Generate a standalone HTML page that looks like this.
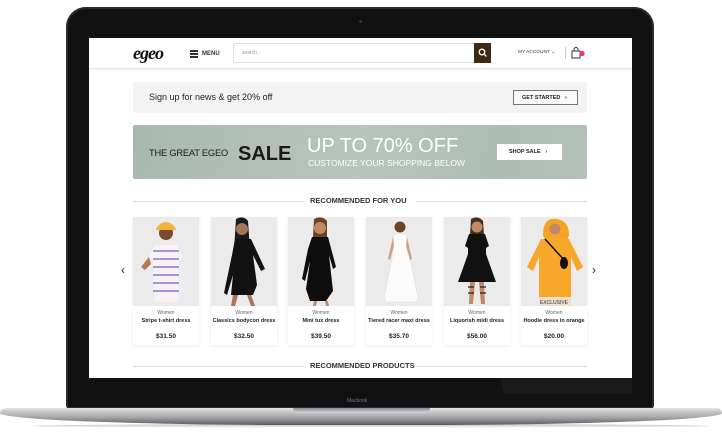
<!DOCTYPE html>
<html><head><meta charset="utf-8"><style>
*{margin:0;padding:0;box-sizing:border-box}
body{width:722px;height:443px;background:#fff;position:relative;overflow:hidden;font-family:"Liberation Sans",sans-serif;line-height:1}
.abs{position:absolute}
.lid{left:66px;top:7px;width:588px;height:402px;background:#111;border-radius:20px 20px 4px 4px;box-shadow:inset 0 0 0 2px #2a2a2a}
.screen{left:89px;top:38px;width:543px;height:340px;background:#fff;overflow:hidden}
.base{left:0;top:408px;width:722px;height:17px;background:linear-gradient(#e8e8ea 0,#c9c9cc 20%,#a6a6aa 55%,#6c6c70 90%,#555 100%);border-radius:6px 6px 50% 50%/6px 6px 14px 14px}
.notch{left:293px;top:408px;width:137px;height:5px;background:linear-gradient(#8a8a90,#d8d8dc);border-radius:0 0 6px 6px}
.shadow{left:30px;top:424px;width:680px;height:4px;background:linear-gradient(#bbb,#fff);border-radius:50%}
.card{position:absolute;top:179px;width:66px;height:128px;background:#fff;box-shadow:0 1px 4px rgba(0,0,0,.08)}
.card .img{height:89px;background:#ebebeb;position:relative;overflow:hidden}
.card .t1{font-size:5px;color:#666;text-align:center;margin-top:5px}
.card .t2{font-size:5.5px;color:#222;font-weight:bold;text-align:center;margin-top:3px}
.card .t3{font-size:6.5px;color:#222;font-weight:bold;text-align:center;margin-top:9px}
.hr{position:absolute;height:1px;background:#ddd}
</style></head><body>
<div class="abs lid"></div>
<div class="abs" style="left:359px;top:20px;width:3px;height:3px;border-radius:50%;background:#333"></div>
<div class="abs screen">
  <div class="abs" style="left:0;top:0;width:543px;height:31px;border-bottom:1px solid #e6e6e6;box-shadow:0 1px 2px rgba(0,0,0,.05)"></div>
  <div class="abs" style="left:44px;top:6px;font-family:'Liberation Serif',serif;font-style:italic;font-weight:bold;font-size:18px;color:#111;letter-spacing:-1px">egeo</div>
  <div class="abs" style="left:101px;top:12px;width:8px;height:1.5px;background:#333;box-shadow:0 3px 0 #333,0 6px 0 #333"></div>
  <div class="abs" style="left:113px;top:13px;font-size:6px;font-weight:bold;color:#333">MENU</div>
  <div class="abs" style="left:144px;top:5px;width:258px;height:20px;border:1px solid #ddd;border-radius:2px"></div>
  <div class="abs" style="left:153px;top:13px;font-size:5px;color:#999">search...</div>
  <div class="abs" style="left:385px;top:5px;width:17px;height:20px;background:#3e2a14"></div>
  <svg class="abs" style="left:389px;top:10px" width="10" height="10"><circle cx="4" cy="4" r="2.8" stroke="#fff" stroke-width="1.3" fill="none"/><line x1="6" y1="6" x2="8.5" y2="8.5" stroke="#fff" stroke-width="1.3"/></svg>
  <div class="abs" style="left:429px;top:13px;font-size:4.8px;color:#333">MY ACCOUNT &#8964;</div>
  <div class="abs" style="left:476px;top:9px;width:1px;height:12px;background:#ccc"></div>
  <svg class="abs" style="left:482px;top:9px" width="14" height="12"><path d="M1 4h8v7H1z" fill="none" stroke="#333" stroke-width="1"/><path d="M3 4V2.5a2 2 0 014 0V4" fill="none" stroke="#333" stroke-width="1"/><circle cx="11" cy="6.5" r="2.6" fill="#f0336b"/></svg>
  <div class="abs" style="left:44px;top:44px;width:454px;height:31px;background:#f3f3f3;border-radius:2px"></div>
  <div class="abs" style="left:60px;top:55px;font-size:9px;color:#222">Sign up for news &amp; get 20% off</div>
  <div class="abs" style="left:424px;top:52px;width:65px;height:15px;border:1px solid #777;background:#fafafa;font-size:5.5px;font-weight:bold;color:#222;padding:4.5px 0 0 8px">GET STARTED &nbsp;&nbsp;&#8250;</div>
  <div class="abs" style="left:44px;top:87px;width:454px;height:54px;background:linear-gradient(100deg,#a9b8ad 0%,#b8c5bb 50%,#aebdb2 80%,#b3c1b6 100%);border-radius:2px"></div>
  <div class="abs" style="left:60px;top:111px;font-size:9.3px;color:#1a1a1a;letter-spacing:-0.2px">THE GREAT EGEO</div>
  <div class="abs" style="left:149px;top:106px;font-size:20px;font-weight:bold;color:#1a1a1a">SALE</div>
  <div class="abs" style="left:218px;top:98px;font-size:20px;color:#fff">UP TO 70% OFF</div>
  <div class="abs" style="left:219px;top:121px;font-size:8.5px;color:#fff">CUSTOMIZE YOUR SHOPPING BELOW</div>
  <div class="abs" style="left:408px;top:106px;width:65px;height:16px;background:#fff;font-size:5.5px;font-weight:bold;color:#222;padding:5.5px 0 0 12px">SHOP SALE &nbsp;&nbsp;&#8250;</div>
  <div class="hr" style="left:44px;top:163px;width:171px"></div>
  <div class="hr" style="left:327px;top:163px;width:171px"></div>
  <div class="abs" style="left:221px;top:159px;font-size:7.5px;font-weight:bold;color:#333">RECOMMENDED FOR YOU</div>
  <div class="abs" style="left:32px;top:226px;font-size:12px;color:#222">&#8249;</div>
  <div class="abs" style="left:503px;top:226px;font-size:12px;color:#222">&#8250;</div>

  <div class="card" style="left:44px"><div class="img"><svg width="66" height="89"><circle cx="33" cy="16" r="7" fill="#7a4a2e"/><path d="M24 10q9-10 18 0l1 3H23z" fill="#f2b33a"/><path d="M22 28l22 0 6 12-4 3 -1 42H21l-1-42-4-3z" fill="#f4f2f7"/><g stroke="#7b5cc8" stroke-width="1.3"><line x1="20" y1="34" x2="46" y2="34"/><line x1="20" y1="42" x2="46" y2="42"/><line x1="20" y1="50" x2="46" y2="50"/><line x1="20" y1="58" x2="46" y2="58"/><line x1="20" y1="66" x2="46" y2="66"/><line x1="20" y1="74" x2="46" y2="74"/></g><path d="M16 40l-8 10 4 3 6-6z" fill="#b07a56"/></svg></div><div class="t1">Women</div><div class="t2">Stripe t-shirt dress</div><div class="t3">$31.50</div></div>

  <div class="card" style="left:122px"><div class="img"><svg width="66" height="89"><path d="M25 2q7-4 12 2l2 30h-16z" fill="#1a1a1a"/><circle cx="31" cy="12" r="6" fill="#a87456"/><path d="M24 22h16l14 30-4 2-8-16 4 30-4 10H20l2-20-6 20-3-2 8-38z" fill="#111"/><path d="M22 78l-2 11h4l3-11zM36 78l4 11h4l-4-11z" fill="#a87456"/></svg></div><div class="t1">Women</div><div class="t2">Classics bodycon dress</div><div class="t3">$32.50</div></div>

  <div class="card" style="left:199px"><div class="img"><svg width="66" height="89"><path d="M26 2q8-4 13 2l0 16h-14z" fill="#6b4426"/><circle cx="32" cy="11" r="6" fill="#c08a66"/><path d="M24 20h16l8 30-3 2-4-14 4 36-7 10H22l-4-12 4-28-5 20-3-2 6-30z" fill="#0e0e0e"/><path d="M26 84l-1 5h3l1-5zM37 84l1 5h3l-1-5z" fill="#c08a66"/></svg></div><div class="t1">Women</div><div class="t2">Mini tux dress</div><div class="t3">$39.50</div></div>

  <div class="card" style="left:277px"><div class="img"><svg width="66" height="89"><circle cx="34" cy="10" r="5.5" fill="#6b4426"/><path d="M28 17h12l4 24 8 40-2 4H20l-2-4 8-40z" fill="#fbfbfb" stroke="#ddd" stroke-width=".5"/><path d="M27 20l-5 22 2 1 4-14zM41 20l5 22-2 1-4-14z" fill="#d4a07c"/></svg></div><div class="t1">Women</div><div class="t2">Tiered racer maxi dress</div><div class="t3">$35.70</div></div>

  <div class="card" style="left:355px"><div class="img"><svg width="66" height="89"><path d="M27 2q7-4 12 2l1 14h-14z" fill="#4a2e1a"/><circle cx="33" cy="10" r="5.5" fill="#c08a66"/><path d="M25 17h16l4 12-3 2 0 6 10 28H14l10-28v-6l-3-2z" fill="#111"/><path d="M26 65l-1 22h4l2-22zM35 65l2 22h4l-1-22z" fill="#c08a66"/><path d="M24 70h6M24 76h6M36 70h6M36 76h6" stroke="#222" stroke-width="1.2"/></svg></div><div class="t1">Women</div><div class="t2">Liquorish midi dress</div><div class="t3">$56.00</div></div>

  <div class="card" style="left:432px"><div class="img"><svg width="66" height="89"><path d="M22 18q0-18 14-16 12 2 12 16l-2 6H24z" fill="#f4a423"/><circle cx="34" cy="12" r="5.5" fill="#c08a66"/><path d="M20 22h28l14 28-6 4-6-14v49H18V40l-6 14-6-4z" fill="#f7a72a"/><path d="M24 22l20 22" stroke="#111" stroke-width="1.5"/><ellipse cx="43" cy="46" rx="4" ry="6" fill="#111"/><rect x="18" y="80" width="32" height="9" fill="#ece6de" opacity=".9"/><text x="33" y="87" font-size="5" text-anchor="middle" font-family="Liberation Sans" fill="#333">EXCLUSIVE</text></svg></div><div class="t1">Women</div><div class="t2">Hoodie dress in orange</div><div class="t3">$20.00</div></div>

  <div class="hr" style="left:44px;top:328px;width:171px"></div>
  <div class="hr" style="left:327px;top:328px;width:171px"></div>
  <div class="abs" style="left:221px;top:324px;font-size:7.5px;font-weight:bold;color:#333">RECOMMENDED PRODUCTS</div>
</div>
<div class="abs" style="left:500px;top:378px;width:132px;height:16px;background:#191919;clip-path:polygon(0 0,100% 0,100% 100%,3% 100%)"></div>
<div class="abs" style="left:347px;top:399px;font-size:5px;color:#777">Macbook</div>
<div class="abs shadow"></div>
<div class="abs base"></div>
<div class="abs notch"></div>
</body></html>
